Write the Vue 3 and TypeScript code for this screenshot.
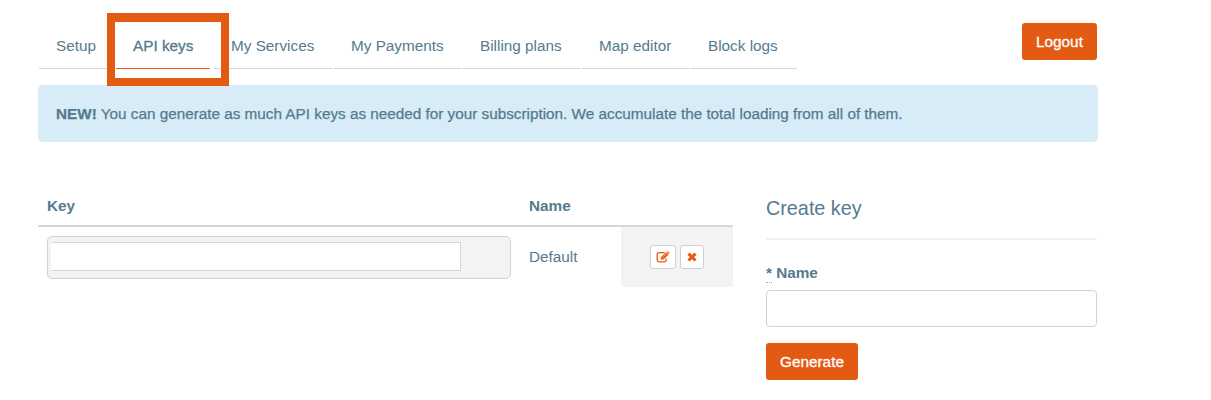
<script setup lang="ts">
import { ref } from 'vue'

const tabs: string[] = ['Setup', 'API keys', 'My Services', 'My Payments', 'Billing plans', 'Map editor', 'Block logs']
const active = ref('API keys')
const keyName = ref('')
</script>

<template>
  <main class="page">
    <header class="top">
      <nav class="tabs">
        <a v-for="tab in tabs" :key="tab" class="tab" :class="{ active: tab === active }" @click="active = tab"><span class="label">{{ tab }}</span></a>
      </nav>
      <button class="btn logout">Logout</button>
      <div class="highlight"></div>
    </header>

    <p class="notice"><span><strong>NEW!</strong> You can generate as much API keys as needed for your subscription. We accumulate the total loading from all of them.</span></p>

    <div class="content">
      <section class="keys">
        <div class="row head">
          <div class="cell">Key</div>
          <div class="name">Name</div>
        </div>
        <div class="row body">
          <div class="cell"><div class="well"><div class="value"></div></div></div>
          <div class="name">Default</div>
          <div class="actions">
            <button class="icon-btn edit" aria-label="Edit">
              <svg width="14" height="12" viewBox="0 0 14 12" fill="none">
                <path d="M8.5 1.6H3Q1.2 1.6 1.2 3.4V9Q1.2 10.8 3 10.8H8.4Q10.2 10.8 10.2 9V7.6" stroke="#e35a13" stroke-width="1.3" />
                <path d="M4.8 8.7V6.2L10.1.9L12.6 3.4L7.3 8.7Z M10.8.4Q11.4-.1 12 .4L13.2 1.6Q13.7 2.1 13.2 2.7L12.9 3Z" fill="#e35a13" />
                <path d="M5.6 6.7L6.9 8M7.2 5.6L10.2 2.6" stroke="#fff" stroke-width=".6" />
              </svg>
            </button>
            <button class="icon-btn remove" aria-label="Remove">
              <svg width="10" height="10" viewBox="0 0 10 10">
                <path d="M1.5 1.7L8.5 8.5M8.5 1.7L1.5 8.5" stroke="#e35a13" stroke-width="3.1" />
              </svg>
            </button>
          </div>
        </div>
      </section>

      <section class="create">
        <h2>Create key</h2>
        <label for="key-name"><abbr title="required">*</abbr> Name</label>
        <input id="key-name" v-model="keyName" type="text" />
        <button class="btn generate">Generate</button>
      </section>
    </div>
  </main>
</template>

<style>
body { margin: 0; background: #fff; }
</style>

<style scoped>
* { box-sizing: border-box; }
.page {
  width: 1211px;
  height: 400px;
  padding-left: 38px;
  overflow: hidden;
  font: 15.3px/20px "Liberation Sans", Arial, sans-serif;
  color: #557a8e;
}
.top {
  position: relative;
  display: flex;
  justify-content: space-between;
  width: 1059px;
  height: 85px;
}
.tabs {
  display: grid;
  grid-template-columns: 77px 98px 120px 129px 119px 109px 108px;
  height: 69px;
  padding-top: 24px;
}
.tab {
  margin: 0 1px;
  padding: 12px 0 0 17px;
  height: 45px;
  border-bottom: 1px solid #d6d6d6;
  white-space: nowrap;
  cursor: pointer;
}
.tab.active {
  margin-right: 3px;
  border-color: #e35a13;
  -webkit-text-stroke: .3px #557a8e;
}
.highlight {
  position: absolute;
  left: 69px;
  top: 13px;
  width: 122px;
  height: 73px;
  border: 8px solid #e35a13;
  border-top-width: 9px;
  pointer-events: none;
}
.btn {
  display: block;
  height: 37px;
  padding: 0;
  border: 0;
  border-radius: 3px;
  background: #e35a13;
  color: #fff;
  font: inherit;
  -webkit-text-stroke: .3px #fff;
}
.logout { width: 75px; margin-top: 23px; }
.notice {
  width: 1060px;
  height: 57px;
  margin: 0;
  padding: 19px 18px;
  border-radius: 5px;
  background: #d7ecf7;
  white-space: nowrap;
  font-size: 15.29px;
  -webkit-text-stroke: .25px #557a8e;
}
.content {
  display: flex;
  gap: 33px;
  padding-top: 43px;
}
.keys { width: 695px; }
.row {
  display: grid;
  grid-template-columns: 491px 92px 112px;
}
.head {
  height: 42px;
  padding-top: 11px;
  border-bottom: 2px solid #d6d6d6;
  font-weight: bold;
}
.cell { padding-left: 9px; }
.body { height: 60px; }
.body .cell { padding-top: 9px; }
.body .name { padding-top: 20px; }
.well {
  width: 464px;
  height: 43px;
  padding: 5px 3px;
  border: 1px solid #d2d2d2;
  border-radius: 5px;
  background: #f3f3f3;
}
.value {
  width: 410px;
  height: 29px;
  border: 1px solid #d6d6d6;
  border-left-color: #fff;
  background: #fff;
}
.actions {
  display: flex;
  gap: 4px;
  padding: 18px 0 0 29px;
  background: #f3f3f3;
}
.icon-btn {
  display: flex;
  align-items: center;
  justify-content: center;
  height: 24px;
  padding: 0;
  border: 1px solid #d2d2d2;
  border-radius: 3px;
  background: #fff;
}
.edit { width: 26px; }
.remove { width: 24px; }
.create { width: 331px; }
h2 {
  height: 55px;
  margin: 0 0 23px;
  padding-top: 11px;
  border-bottom: 2px solid #f2f2f2;
  font-size: 19.8px;
  line-height: 24px;
  font-weight: normal;
}
label {
  display: block;
  height: 27px;
  font-weight: bold;
}
abbr {
  display: inline-block;
  height: 20px;
  border-bottom: 1px dotted #aaa;
  text-decoration: none;
}
input {
  display: block;
  width: 331px;
  height: 37px;
  padding: 0 10px;
  border: 1px solid #d2d2d2;
  border-radius: 4px;
  background: #fff;
  font: inherit;
  color: inherit;
}
.generate { width: 92px; margin-top: 16px; }
</style>
